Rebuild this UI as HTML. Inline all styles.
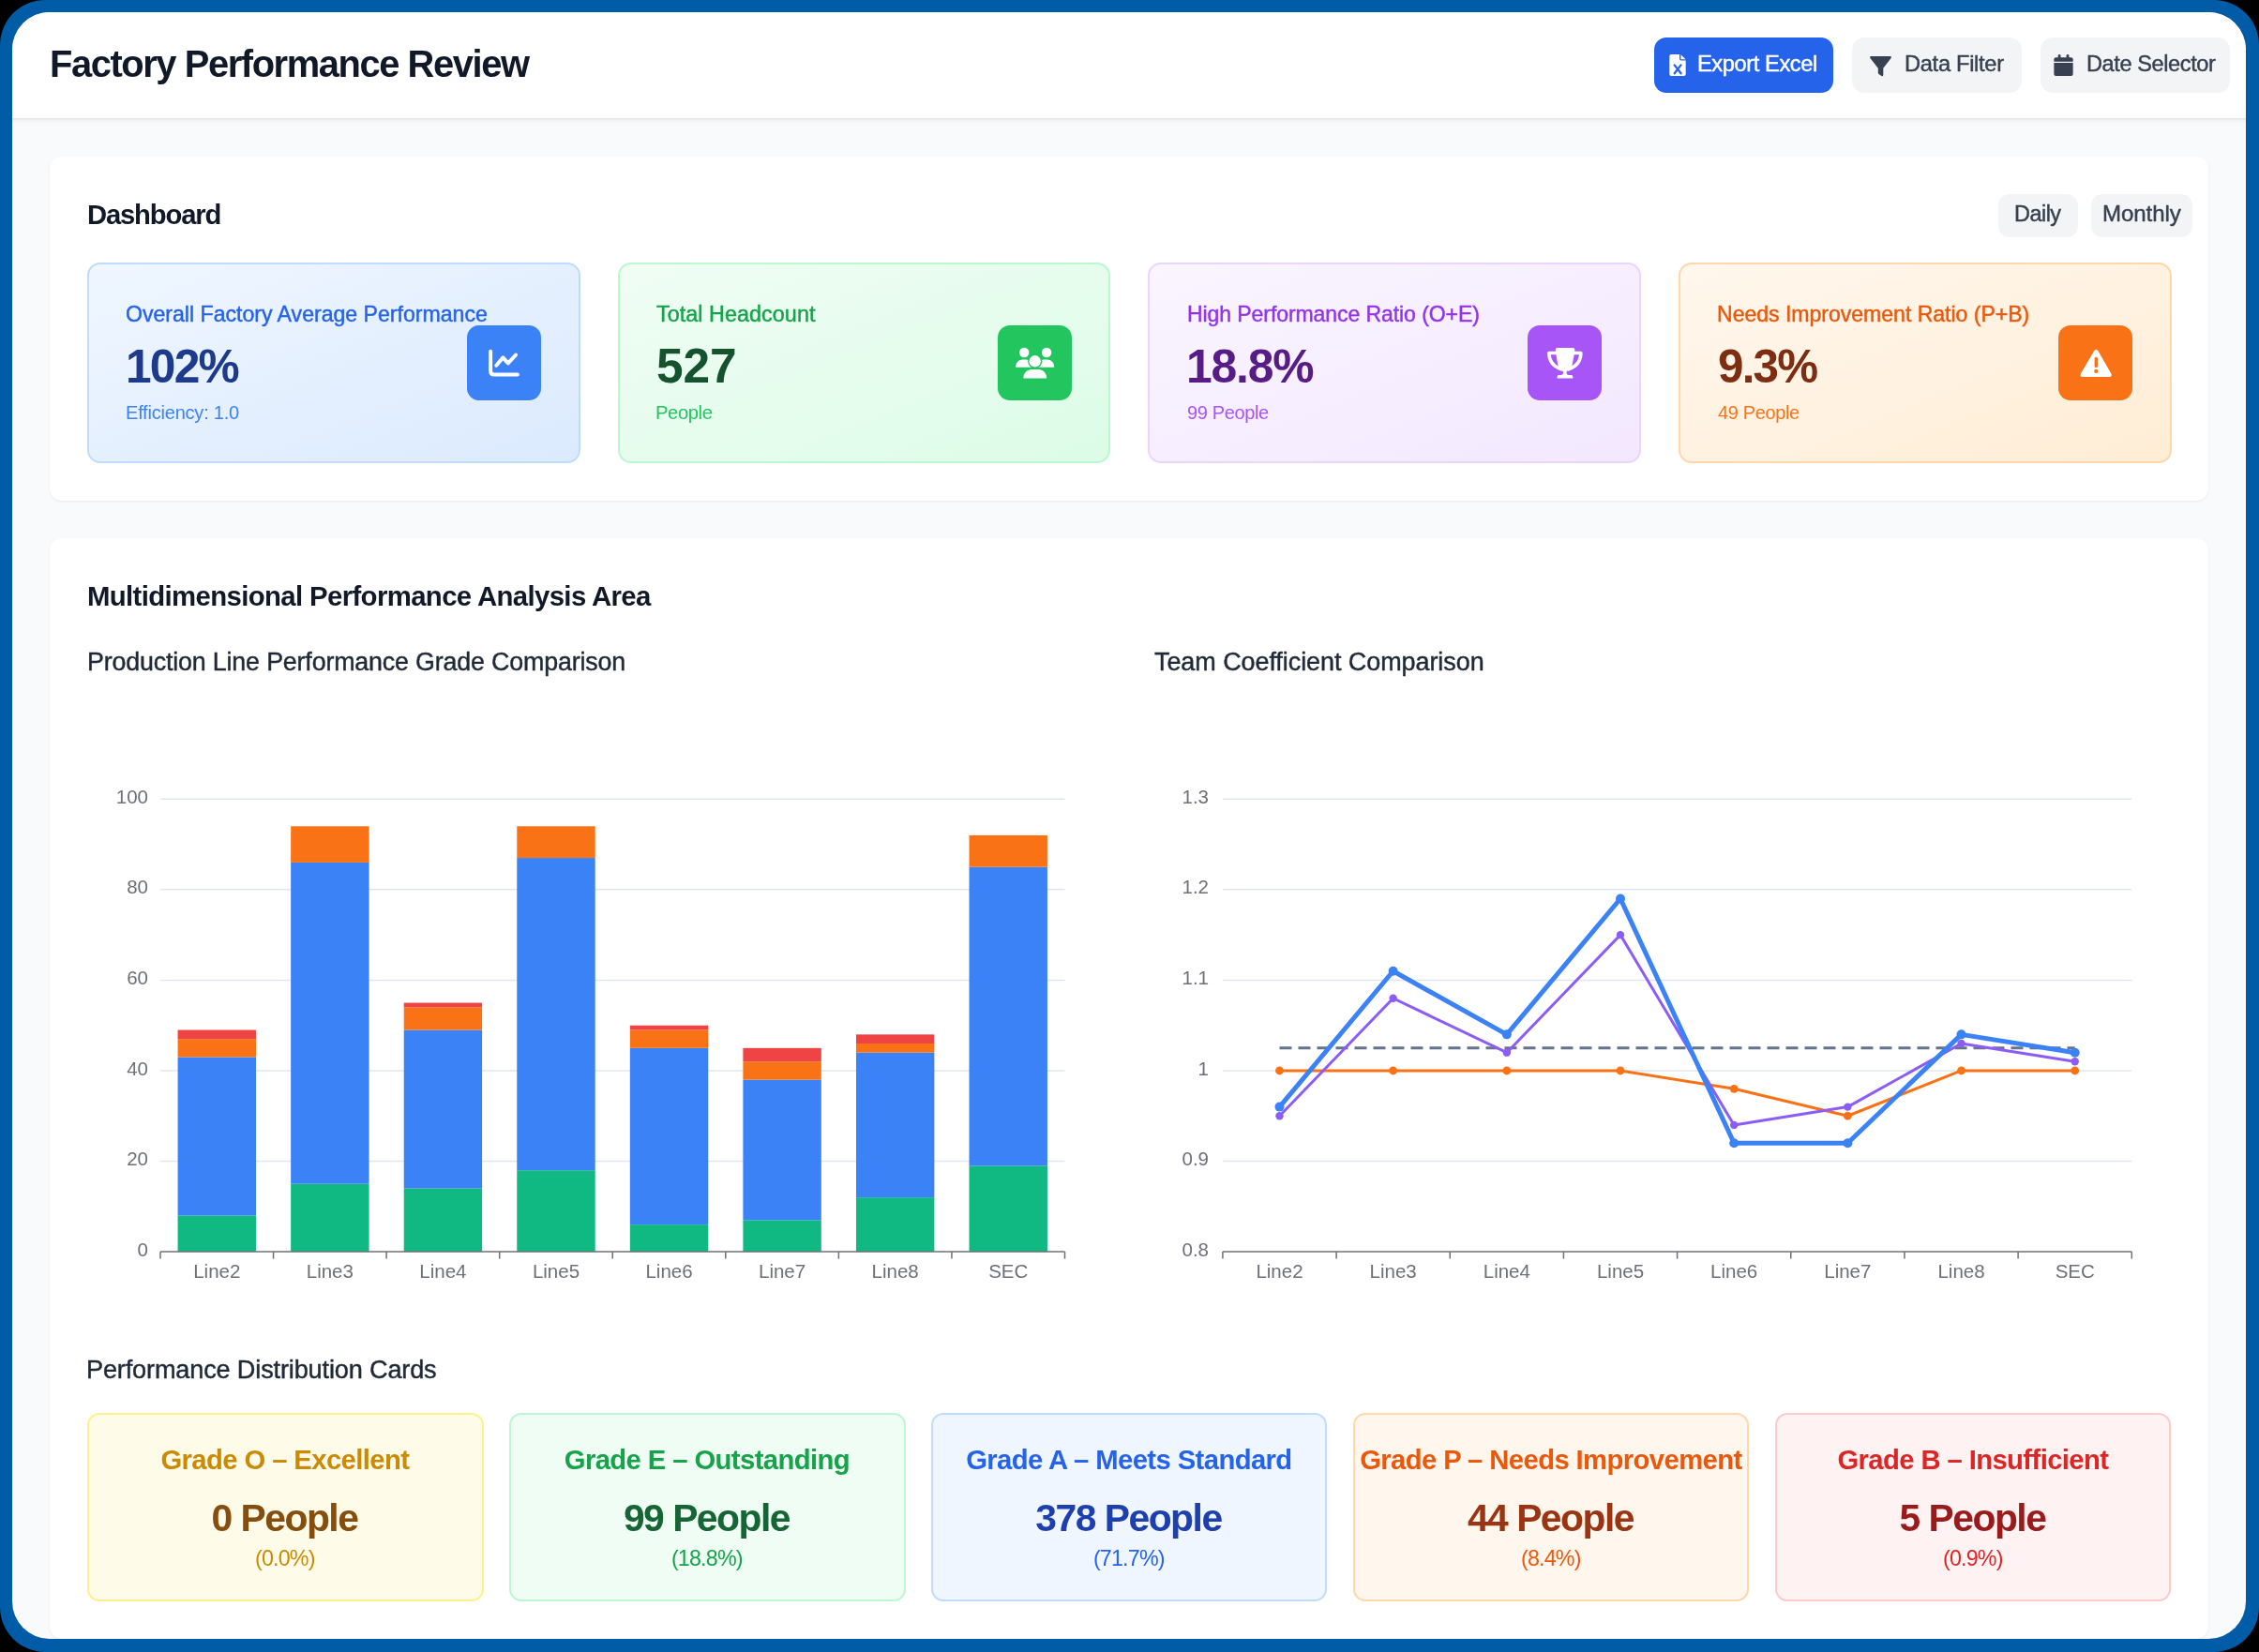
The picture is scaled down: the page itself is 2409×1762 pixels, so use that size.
<!DOCTYPE html><html><head><meta charset="utf-8"><title>Factory Performance Review</title><style>

html,body{margin:0;padding:0}
body{width:2409px;height:1762px;overflow:hidden;background:#000;position:relative;font-family:"Liberation Sans", sans-serif}
.frame{position:absolute;left:0;top:0;width:2409px;height:1762px;background:#005ca6;border-radius:48px}
.screen{position:absolute;left:0;top:0;width:2409px;height:1762px;background:#f9fafb;clip-path:inset(13px 14px 14px 13px round 40px);overflow:hidden}
.t{position:absolute;white-space:nowrap;line-height:1;will-change:transform;font-family:"Liberation Sans", sans-serif}
.abs{position:absolute}
.btn{position:absolute;border-radius:13px;background:#f3f4f6}
.kpi{position:absolute;top:279.9px;width:525.5px;height:214px;border-radius:14px;border:2px solid;box-sizing:border-box}
.ibox{position:absolute;top:347.2px;width:79px;height:79.5px;border-radius:13px}
.ibox svg{position:absolute;left:0;top:0}
.gcard{position:absolute;top:1507.1px;height:200.6px;border-radius:13px;border:2px solid;box-sizing:border-box}
.gt{position:absolute;left:0;right:0;text-align:center;white-space:nowrap;line-height:1;will-change:transform}

</style></head><body><div class="frame"></div><div class="screen">
<div class="abs" style="left:0;top:0;width:2409px;height:126px;background:#fff;box-shadow:0 1.5px 4.5px rgba(0,0,0,0.07),0 1px 1.5px rgba(0,0,0,0.05)"></div>
<div class="t" style="left:52.5px;top:49.00px;font-size:39.89px;font-weight:700;letter-spacing:-1.42px;color:#111827;">Factory Performance Review</div>
<div class="btn" style="left:1764px;top:39.6px;width:191px;height:59.4px;background:#2563eb"></div>
<div class="btn" style="left:1975px;top:39.6px;width:181.4px;height:59.4px"></div>
<div class="btn" style="left:2176.3px;top:39.6px;width:201.7px;height:59.4px"></div>
<svg class="abs" style="left:1779.7px;top:58.2px" width="18" height="23" viewBox="0 0 17.2 22.8"><path d="M2,0 H10.6 V4.6 Q10.6,6.5 12.5,6.5 H17.2 V20.8 Q17.2,22.8 15.2,22.8 H2 Q0,22.8 0,20.8 V2 Q0,0 2,0 Z" fill="#fff"/><path d="M12,0.2 L17.1,5.3 H12 Z" fill="#fff"/><path d="M5.3,11.3 L12.1,20.1 M12.1,11.3 L5.3,20.1" stroke="#2563eb" stroke-width="2.3" stroke-linecap="round"/></svg>
<svg class="abs" style="left:1993.5px;top:59.9px" width="23" height="22" viewBox="0 0 23 22"><path d="M1.2,0 H21.8 Q23.4,0.2 22.6,1.9 L14.3,12.8 V19.8 Q14.2,21.9 12.4,20.9 L9.6,19.1 Q8.8,18.6 8.8,17.6 V12.8 L0.4,1.9 Q-0.4,0.2 1.2,0 Z" fill="#374151"/></svg>
<svg class="abs" style="left:2190px;top:58.1px" width="21" height="23" viewBox="0 0 20.1 22.8"><path d="M0,7.6 V5.3 Q0,3.2 2.1,3.2 H18 Q20.1,3.2 20.1,5.3 V7.6 Z" fill="#374151"/><rect x="4.3" y="0" width="2.8" height="5" rx="1.4" fill="#374151"/><rect x="13.1" y="0" width="2.8" height="5" rx="1.4" fill="#374151"/><path d="M0,9 H20.1 V20.8 Q20.1,22.8 18.1,22.8 H2 Q0,22.8 0,20.8 Z" fill="#374151"/></svg>
<div class="t" style="left:1810px;top:57.00px;font-size:23.64px;font-weight:400;letter-spacing:-0.4px;color:#ffffff;-webkit-text-stroke:0.45px #ffffff;">Export Excel</div>
<div class="t" style="left:2030.6px;top:57.00px;font-size:23.67px;font-weight:400;letter-spacing:-0.31px;color:#374151;-webkit-text-stroke:0.45px #374151;">Data Filter</div>
<div class="t" style="left:2224.8px;top:57.00px;font-size:23.55px;font-weight:400;letter-spacing:-0.4px;color:#374151;-webkit-text-stroke:0.45px #374151;">Date Selector</div>
<div class="abs" style="left:52.8px;top:166.7px;width:2302px;height:367.3px;background:#fff;border-radius:13px;box-shadow:0 1px 3px rgba(0,0,0,0.05),0 1px 2px rgba(0,0,0,0.03)"></div>
<div class="t" style="left:93px;top:215.00px;font-size:29.23px;font-weight:700;letter-spacing:-1.163px;color:#111827;">Dashboard</div>
<div class="btn" style="left:2130.5px;top:207.3px;width:85.5px;height:45.4px;border-radius:12px"></div>
<div class="btn" style="left:2229.6px;top:207.3px;width:108.4px;height:45.4px;border-radius:12px"></div>
<div class="t" style="left:2148px;top:217.00px;font-size:23.44px;font-weight:400;letter-spacing:-0.5px;color:#374151;-webkit-text-stroke:0.45px #374151;">Daily</div>
<div class="t" style="left:2241.6px;top:216.00px;font-size:24.07px;font-weight:400;letter-spacing:-0.067px;color:#374151;-webkit-text-stroke:0.45px #374151;">Monthly</div>
<div class="kpi" style="left:93.1px;background:linear-gradient(to bottom right,#eff6ff,#dbeafe);border-color:#bfdbfe"></div>
<div class="ibox" style="left:498.1px;background:#3b82f6"><svg width="79" height="79.5" viewBox="0 0 79 79.5"><path d="M25.1,27.8 V48.4 Q25.1,52.6 29.3,52.6 H53.9" fill="none" stroke="#fff" stroke-width="4" stroke-linecap="round" stroke-linejoin="round"/><path d="M31.3,42.8 L38.4,34.4 L43.8,40.4 L52.1,31.5" fill="none" stroke="#fff" stroke-width="4" stroke-linecap="round" stroke-linejoin="round"/></svg></div>
<div class="t" style="left:133.8px;top:324.00px;font-size:23.12px;font-weight:400;letter-spacing:-0.012px;color:#2563eb;-webkit-text-stroke:0.45px #2563eb;">Overall Factory Average Performance</div>
<div class="t" style="left:134px;top:367.00px;font-size:49.68px;font-weight:700;letter-spacing:-1.8px;color:#1e3a8a;">102%</div>
<div class="t" style="left:134px;top:430.00px;font-size:20.03px;font-weight:400;letter-spacing:-0.214px;color:#3b82f6;">Efficiency: 1.0</div>
<div class="kpi" style="left:658.6px;background:linear-gradient(to bottom right,#f0fdf4,#dcfce7);border-color:#bbf7d0"></div>
<div class="ibox" style="left:1063.6px;background:#22c55e"><svg width="79" height="79.5" viewBox="0 0 79 79.5"><circle cx="28.2" cy="29" r="5.2" fill="#fff"/><circle cx="52.1" cy="29" r="5.2" fill="#fff"/><path d="M19,44.8 C19,39.6 22.6,36.6 26.6,36.6 H30 C34,36.6 37.5,39.6 37.5,44.8 Z" fill="#fff"/><path d="M41.7,44.8 C41.7,39.6 45.2,36.6 49.2,36.6 H52.6 C56.6,36.6 60.2,39.6 60.2,44.8 Z" fill="#fff"/><circle cx="39.7" cy="38.3" r="7.6" fill="#22c55e"/><circle cx="39.7" cy="38.3" r="6.2" fill="#fff"/><path d="M27.3,56.6 C27.3,50.6 31.5,46.9 36.3,46.9 H43.2 C48,46.9 52.2,50.6 52.2,56.6 Z" fill="#fff"/></svg></div>
<div class="t" style="left:700.2px;top:324.00px;font-size:23.33px;font-weight:400;letter-spacing:0.057px;color:#16a34a;-webkit-text-stroke:0.45px #16a34a;">Total Headcount</div>
<div class="t" style="left:699.5px;top:365.00px;font-size:51.43px;font-weight:700;letter-spacing:-0.1px;color:#14532d;">527</div>
<div class="t" style="left:699px;top:430.00px;font-size:20.21px;font-weight:400;letter-spacing:-0.4px;color:#22c55e;">People</div>
<div class="kpi" style="left:1224.4px;background:linear-gradient(to bottom right,#faf5ff,#f3e8ff);border-color:#e9d5ff"></div>
<div class="ibox" style="left:1629.4px;background:#a855f7"><svg width="79" height="79.5" viewBox="0 0 79 79.5"><path d="M31,29.5 H22.9 C22.9,38.5 28.5,44.5 37,47.2 M48.5,29.5 H56.8 C56.8,38.5 51.2,44.5 42.7,47.2" fill="none" stroke="#fff" stroke-width="3.6" stroke-linejoin="round"/><path d="M29.9,25.6 Q29.9,23.9 31.7,23.9 H48.5 Q50.3,23.9 50.3,25.6 V28.5 L47.3,43.5 Q46.2,46.8 42.8,48.2 Q41.2,49.2 41.5,50.7 Q41.8,52.9 44,52.9 H46.4 Q48.3,52.9 48.3,54.8 V56.6 H31.6 V54.8 Q31.6,52.9 33.5,52.9 H35.6 Q37.8,52.9 38.1,50.7 Q38.4,49.2 36.8,48.2 Q33.6,46.8 32.6,43.5 L29.9,28.5 Z" fill="#fff"/></svg></div>
<div class="t" style="left:1265.5px;top:324.00px;font-size:23.05px;font-weight:400;letter-spacing:-0.096px;color:#9333ea;-webkit-text-stroke:0.45px #9333ea;">High Performance Ratio (O+E)</div>
<div class="t" style="left:1265.3px;top:367.00px;font-size:49.89px;font-weight:700;letter-spacing:-1.225px;color:#581c87;">18.8%</div>
<div class="t" style="left:1266px;top:430.00px;font-size:20.02px;font-weight:400;letter-spacing:-0.375px;color:#a855f7;">99 People</div>
<div class="kpi" style="left:1790.3px;background:linear-gradient(to bottom right,#fff7ed,#ffedd5);border-color:#fed7aa"></div>
<div class="ibox" style="left:2195.3px;background:#f97316"><svg width="79" height="79.5" viewBox="0 0 79 79.5"><path d="M38.2,27.2 Q40.3,24.2 42.4,27.2 L56.2,51.2 Q57.8,54.9 54.4,54.9 H25.8 Q22.4,54.9 24,51.2 Z" fill="#fff"/><path d="M40.3,35.4 V43.4" stroke="#f97316" stroke-width="3.4" stroke-linecap="round"/><circle cx="40.3" cy="48.9" r="2.1" fill="#f97316"/></svg></div>
<div class="t" style="left:1831px;top:324.00px;font-size:23.12px;font-weight:400;letter-spacing:-0.046px;color:#ea580c;-webkit-text-stroke:0.45px #ea580c;">Needs Improvement Ratio (P+B)</div>
<div class="t" style="left:1831.7px;top:366.00px;font-size:49.35px;font-weight:700;letter-spacing:-1.767px;color:#7c2d12;">9.3%</div>
<div class="t" style="left:1832px;top:431.00px;font-size:19.92px;font-weight:400;letter-spacing:-0.312px;color:#f97316;">49 People</div>
<div class="abs" style="left:52.8px;top:573.8px;width:2302px;height:1174.5px;background:#fff;border-radius:13px;box-shadow:0 1px 3px rgba(0,0,0,0.05),0 1px 2px rgba(0,0,0,0.03)"></div>
<div class="t" style="left:92.6px;top:621.00px;font-size:29.35px;font-weight:700;letter-spacing:-0.632px;color:#111827;">Multidimensional Performance Analysis Area</div>
<div class="t" style="left:92.6px;top:693.00px;font-size:26.8px;font-weight:400;letter-spacing:-0.158px;color:#1f2937;-webkit-text-stroke:0.45px #1f2937;">Production Line Performance Grade Comparison</div>
<div class="t" style="left:1231.3px;top:693.00px;font-size:26.97px;font-weight:400;letter-spacing:-0.062px;color:#1f2937;-webkit-text-stroke:0.45px #1f2937;">Team Coefficient Comparison</div>
<div class="t" style="left:92.2px;top:1447.00px;font-size:27.12px;font-weight:400;letter-spacing:-0.155px;color:#1f2937;-webkit-text-stroke:0.45px #1f2937;">Performance Distribution Cards</div>
<svg class="abs" style="left:0;top:0" width="2409" height="1762" viewBox="0 0 2409 1762" font-family="Liberation Sans, sans-serif"><line x1="171.0" y1="1238.54" x2="1135.5" y2="1238.54" stroke="#e0e6f1" stroke-width="1.5"/><line x1="171.0" y1="1141.98" x2="1135.5" y2="1141.98" stroke="#e0e6f1" stroke-width="1.5"/><line x1="171.0" y1="1045.42" x2="1135.5" y2="1045.42" stroke="#e0e6f1" stroke-width="1.5"/><line x1="171.0" y1="948.86" x2="1135.5" y2="948.86" stroke="#e0e6f1" stroke-width="1.5"/><line x1="171.0" y1="852.30" x2="1135.5" y2="852.30" stroke="#e0e6f1" stroke-width="1.5"/><text x="158" y="1339.70" text-anchor="end" font-size="20.5" fill="#6e7079">0</text><text x="158" y="1243.14" text-anchor="end" font-size="20.5" fill="#6e7079">20</text><text x="158" y="1146.58" text-anchor="end" font-size="20.5" fill="#6e7079">40</text><text x="158" y="1050.02" text-anchor="end" font-size="20.5" fill="#6e7079">60</text><text x="158" y="953.46" text-anchor="end" font-size="20.5" fill="#6e7079">80</text><text x="158" y="856.90" text-anchor="end" font-size="20.5" fill="#6e7079">100</text><rect x="189.58" y="1296.48" width="83.4" height="38.62" fill="#10b981"/><rect x="189.58" y="1127.50" width="83.4" height="168.98" fill="#3b82f6"/><rect x="189.58" y="1108.18" width="83.4" height="19.31" fill="#f97316"/><rect x="189.58" y="1098.53" width="83.4" height="9.66" fill="#ef4444"/><text x="231.28" y="1363" text-anchor="middle" font-size="20.5" fill="#6e7079">Line2</text><rect x="310.14" y="1262.68" width="83.4" height="72.42" fill="#10b981"/><rect x="310.14" y="919.89" width="83.4" height="342.79" fill="#3b82f6"/><rect x="310.14" y="881.27" width="83.4" height="38.62" fill="#f97316"/><text x="351.84" y="1363" text-anchor="middle" font-size="20.5" fill="#6e7079">Line3</text><rect x="430.71" y="1267.51" width="83.4" height="67.59" fill="#10b981"/><rect x="430.71" y="1098.53" width="83.4" height="168.98" fill="#3b82f6"/><rect x="430.71" y="1074.39" width="83.4" height="24.14" fill="#f97316"/><rect x="430.71" y="1069.56" width="83.4" height="4.83" fill="#ef4444"/><text x="472.41" y="1363" text-anchor="middle" font-size="20.5" fill="#6e7079">Line4</text><rect x="551.27" y="1248.20" width="83.4" height="86.90" fill="#10b981"/><rect x="551.27" y="915.06" width="83.4" height="333.13" fill="#3b82f6"/><rect x="551.27" y="881.27" width="83.4" height="33.80" fill="#f97316"/><text x="592.97" y="1363" text-anchor="middle" font-size="20.5" fill="#6e7079">Line5</text><rect x="671.83" y="1306.13" width="83.4" height="28.97" fill="#10b981"/><rect x="671.83" y="1117.84" width="83.4" height="188.29" fill="#3b82f6"/><rect x="671.83" y="1098.53" width="83.4" height="19.31" fill="#f97316"/><rect x="671.83" y="1093.70" width="83.4" height="4.83" fill="#ef4444"/><text x="713.53" y="1363" text-anchor="middle" font-size="20.5" fill="#6e7079">Line6</text><rect x="792.39" y="1301.30" width="83.4" height="33.80" fill="#10b981"/><rect x="792.39" y="1151.64" width="83.4" height="149.67" fill="#3b82f6"/><rect x="792.39" y="1132.32" width="83.4" height="19.31" fill="#f97316"/><rect x="792.39" y="1117.84" width="83.4" height="14.48" fill="#ef4444"/><text x="834.09" y="1363" text-anchor="middle" font-size="20.5" fill="#6e7079">Line7</text><rect x="912.96" y="1277.16" width="83.4" height="57.94" fill="#10b981"/><rect x="912.96" y="1122.67" width="83.4" height="154.50" fill="#3b82f6"/><rect x="912.96" y="1113.01" width="83.4" height="9.66" fill="#f97316"/><rect x="912.96" y="1103.36" width="83.4" height="9.66" fill="#ef4444"/><text x="954.66" y="1363" text-anchor="middle" font-size="20.5" fill="#6e7079">Line8</text><rect x="1033.52" y="1243.37" width="83.4" height="91.73" fill="#10b981"/><rect x="1033.52" y="924.72" width="83.4" height="318.65" fill="#3b82f6"/><rect x="1033.52" y="890.92" width="83.4" height="33.80" fill="#f97316"/><text x="1075.22" y="1363" text-anchor="middle" font-size="20.5" fill="#6e7079">SEC</text><line x1="171.0" y1="1335.1" x2="1135.5" y2="1335.1" stroke="#6e7079" stroke-width="1.5"/><line x1="171.00" y1="1335.1" x2="171.00" y2="1342.6" stroke="#6e7079" stroke-width="1.5"/><line x1="291.56" y1="1335.1" x2="291.56" y2="1342.6" stroke="#6e7079" stroke-width="1.5"/><line x1="412.12" y1="1335.1" x2="412.12" y2="1342.6" stroke="#6e7079" stroke-width="1.5"/><line x1="532.69" y1="1335.1" x2="532.69" y2="1342.6" stroke="#6e7079" stroke-width="1.5"/><line x1="653.25" y1="1335.1" x2="653.25" y2="1342.6" stroke="#6e7079" stroke-width="1.5"/><line x1="773.81" y1="1335.1" x2="773.81" y2="1342.6" stroke="#6e7079" stroke-width="1.5"/><line x1="894.38" y1="1335.1" x2="894.38" y2="1342.6" stroke="#6e7079" stroke-width="1.5"/><line x1="1014.94" y1="1335.1" x2="1014.94" y2="1342.6" stroke="#6e7079" stroke-width="1.5"/><line x1="1135.50" y1="1335.1" x2="1135.50" y2="1342.6" stroke="#6e7079" stroke-width="1.5"/><line x1="1303.9" y1="1238.54" x2="2273.3" y2="1238.54" stroke="#e0e6f1" stroke-width="1.5"/><line x1="1303.9" y1="1141.98" x2="2273.3" y2="1141.98" stroke="#e0e6f1" stroke-width="1.5"/><line x1="1303.9" y1="1045.42" x2="2273.3" y2="1045.42" stroke="#e0e6f1" stroke-width="1.5"/><line x1="1303.9" y1="948.86" x2="2273.3" y2="948.86" stroke="#e0e6f1" stroke-width="1.5"/><line x1="1303.9" y1="852.30" x2="2273.3" y2="852.30" stroke="#e0e6f1" stroke-width="1.5"/><text x="1289" y="1339.70" text-anchor="end" font-size="20.5" fill="#6e7079">0.8</text><text x="1289" y="1243.14" text-anchor="end" font-size="20.5" fill="#6e7079">0.9</text><text x="1289" y="1146.58" text-anchor="end" font-size="20.5" fill="#6e7079">1</text><text x="1289" y="1050.02" text-anchor="end" font-size="20.5" fill="#6e7079">1.1</text><text x="1289" y="953.46" text-anchor="end" font-size="20.5" fill="#6e7079">1.2</text><text x="1289" y="856.90" text-anchor="end" font-size="20.5" fill="#6e7079">1.3</text><text x="1364.49" y="1363" text-anchor="middle" font-size="20.5" fill="#6e7079">Line2</text><text x="1485.66" y="1363" text-anchor="middle" font-size="20.5" fill="#6e7079">Line3</text><text x="1606.84" y="1363" text-anchor="middle" font-size="20.5" fill="#6e7079">Line4</text><text x="1728.01" y="1363" text-anchor="middle" font-size="20.5" fill="#6e7079">Line5</text><text x="1849.19" y="1363" text-anchor="middle" font-size="20.5" fill="#6e7079">Line6</text><text x="1970.36" y="1363" text-anchor="middle" font-size="20.5" fill="#6e7079">Line7</text><text x="2091.54" y="1363" text-anchor="middle" font-size="20.5" fill="#6e7079">Line8</text><text x="2212.71" y="1363" text-anchor="middle" font-size="20.5" fill="#6e7079">SEC</text><line x1="1303.9" y1="1335.1" x2="2273.3" y2="1335.1" stroke="#6e7079" stroke-width="1.5"/><line x1="1303.90" y1="1335.1" x2="1303.90" y2="1342.6" stroke="#6e7079" stroke-width="1.5"/><line x1="1425.08" y1="1335.1" x2="1425.08" y2="1342.6" stroke="#6e7079" stroke-width="1.5"/><line x1="1546.25" y1="1335.1" x2="1546.25" y2="1342.6" stroke="#6e7079" stroke-width="1.5"/><line x1="1667.43" y1="1335.1" x2="1667.43" y2="1342.6" stroke="#6e7079" stroke-width="1.5"/><line x1="1788.60" y1="1335.1" x2="1788.60" y2="1342.6" stroke="#6e7079" stroke-width="1.5"/><line x1="1909.78" y1="1335.1" x2="1909.78" y2="1342.6" stroke="#6e7079" stroke-width="1.5"/><line x1="2030.95" y1="1335.1" x2="2030.95" y2="1342.6" stroke="#6e7079" stroke-width="1.5"/><line x1="2152.12" y1="1335.1" x2="2152.12" y2="1342.6" stroke="#6e7079" stroke-width="1.5"/><line x1="2273.30" y1="1335.1" x2="2273.30" y2="1342.6" stroke="#6e7079" stroke-width="1.5"/><line x1="1364.49" y1="1117.8" x2="2212.71" y2="1117.8" stroke="#64748b" stroke-width="3" stroke-dasharray="13 7"/><polyline points="1364.49,1141.98 1485.66,1141.98 1606.84,1141.98 1728.01,1141.98 1849.19,1161.29 1970.36,1190.26 2091.54,1141.98 2212.71,1141.98" fill="none" stroke="#f97316" stroke-width="3" stroke-linejoin="round"/><circle cx="1364.49" cy="1141.98" r="4.4" fill="#f97316"/><circle cx="1485.66" cy="1141.98" r="4.4" fill="#f97316"/><circle cx="1606.84" cy="1141.98" r="4.4" fill="#f97316"/><circle cx="1728.01" cy="1141.98" r="4.4" fill="#f97316"/><circle cx="1849.19" cy="1161.29" r="4.4" fill="#f97316"/><circle cx="1970.36" cy="1190.26" r="4.4" fill="#f97316"/><circle cx="2091.54" cy="1141.98" r="4.4" fill="#f97316"/><circle cx="2212.71" cy="1141.98" r="4.4" fill="#f97316"/><polyline points="1364.49,1190.26 1485.66,1064.73 1606.84,1122.67 1728.01,997.14 1849.19,1199.92 1970.36,1180.60 2091.54,1113.01 2212.71,1132.32" fill="none" stroke="#8b5cf6" stroke-width="3" stroke-linejoin="round"/><circle cx="1364.49" cy="1190.26" r="4.2" fill="#8b5cf6"/><circle cx="1485.66" cy="1064.73" r="4.2" fill="#8b5cf6"/><circle cx="1606.84" cy="1122.67" r="4.2" fill="#8b5cf6"/><circle cx="1728.01" cy="997.14" r="4.2" fill="#8b5cf6"/><circle cx="1849.19" cy="1199.92" r="4.2" fill="#8b5cf6"/><circle cx="1970.36" cy="1180.60" r="4.2" fill="#8b5cf6"/><circle cx="2091.54" cy="1113.01" r="4.2" fill="#8b5cf6"/><circle cx="2212.71" cy="1132.32" r="4.2" fill="#8b5cf6"/><polyline points="1364.49,1180.60 1485.66,1035.76 1606.84,1103.36 1728.01,958.52 1849.19,1219.23 1970.36,1219.23 2091.54,1103.36 2212.71,1122.67" fill="none" stroke="#3b82f6" stroke-width="5" stroke-linejoin="round"/><circle cx="1364.49" cy="1180.60" r="5" fill="#3b82f6"/><circle cx="1485.66" cy="1035.76" r="5" fill="#3b82f6"/><circle cx="1606.84" cy="1103.36" r="5" fill="#3b82f6"/><circle cx="1728.01" cy="958.52" r="5" fill="#3b82f6"/><circle cx="1849.19" cy="1219.23" r="5" fill="#3b82f6"/><circle cx="1970.36" cy="1219.23" r="5" fill="#3b82f6"/><circle cx="2091.54" cy="1103.36" r="5" fill="#3b82f6"/><circle cx="2212.71" cy="1122.67" r="5" fill="#3b82f6"/></svg>
<div class="gcard" style="left:93.2px;width:422.40000000000003px;background:#fefce8;border-color:#fef08a"></div>
<div class="gt" style="left:93.2px;width:422.40000000000003px;top:1543.00px;font-size:29.25px;letter-spacing:-0.603px;color:#ca8a04;font-weight:700;text-indent:-0.603px">Grade O – Excellent</div>
<div class="gt" style="left:93.2px;width:422.40000000000003px;top:1599.00px;font-size:40.83px;letter-spacing:-1.502px;color:#854d0e;font-weight:700;text-indent:-1.502px">0 People</div>
<div class="gt" style="left:93.2px;width:422.40000000000003px;top:1651.00px;font-size:23.26px;letter-spacing:-0.798px;color:#ca8a04;font-weight:400;text-indent:-0.798px">(0.0%)</div>
<div class="gcard" style="left:543.15px;width:422.4px;background:#f0fdf4;border-color:#bbf7d0"></div>
<div class="gt" style="left:543.15px;width:422.4px;top:1543.00px;font-size:29.25px;letter-spacing:-0.603px;color:#16a34a;font-weight:700;text-indent:-0.603px">Grade E – Outstanding</div>
<div class="gt" style="left:543.15px;width:422.4px;top:1599.00px;font-size:40.83px;letter-spacing:-1.502px;color:#166534;font-weight:700;text-indent:-1.502px">99 People</div>
<div class="gt" style="left:543.15px;width:422.4px;top:1651.00px;font-size:23.26px;letter-spacing:-0.798px;color:#16a34a;font-weight:400;text-indent:-0.798px">(18.8%)</div>
<div class="gcard" style="left:993.1px;width:422.4px;background:#eff6ff;border-color:#bfdbfe"></div>
<div class="gt" style="left:993.1px;width:422.4px;top:1543.00px;font-size:29.25px;letter-spacing:-0.603px;color:#2563eb;font-weight:700;text-indent:-0.603px">Grade A – Meets Standard</div>
<div class="gt" style="left:993.1px;width:422.4px;top:1599.00px;font-size:40.83px;letter-spacing:-1.502px;color:#1e40af;font-weight:700;text-indent:-1.502px">378 People</div>
<div class="gt" style="left:993.1px;width:422.4px;top:1651.00px;font-size:23.26px;letter-spacing:-0.798px;color:#2563eb;font-weight:400;text-indent:-0.798px">(71.7%)</div>
<div class="gcard" style="left:1443.05px;width:422.4000000000001px;background:#fff7ed;border-color:#fed7aa"></div>
<div class="gt" style="left:1443.05px;width:422.4000000000001px;top:1543.00px;font-size:29.25px;letter-spacing:-0.603px;color:#ea580c;font-weight:700;text-indent:-0.603px">Grade P – Needs Improvement</div>
<div class="gt" style="left:1443.05px;width:422.4000000000001px;top:1599.00px;font-size:40.83px;letter-spacing:-1.502px;color:#9a3412;font-weight:700;text-indent:-1.502px">44 People</div>
<div class="gt" style="left:1443.05px;width:422.4000000000001px;top:1651.00px;font-size:23.26px;letter-spacing:-0.798px;color:#ea580c;font-weight:400;text-indent:-0.798px">(8.4%)</div>
<div class="gcard" style="left:1893.0px;width:422.4000000000001px;background:#fef2f2;border-color:#fecaca"></div>
<div class="gt" style="left:1893.0px;width:422.4000000000001px;top:1543.00px;font-size:29.25px;letter-spacing:-0.603px;color:#dc2626;font-weight:700;text-indent:-0.603px">Grade B – Insufficient</div>
<div class="gt" style="left:1893.0px;width:422.4000000000001px;top:1599.00px;font-size:40.83px;letter-spacing:-1.502px;color:#991b1b;font-weight:700;text-indent:-1.502px">5 People</div>
<div class="gt" style="left:1893.0px;width:422.4000000000001px;top:1651.00px;font-size:23.26px;letter-spacing:-0.798px;color:#dc2626;font-weight:400;text-indent:-0.798px">(0.9%)</div>
</div></body></html>
